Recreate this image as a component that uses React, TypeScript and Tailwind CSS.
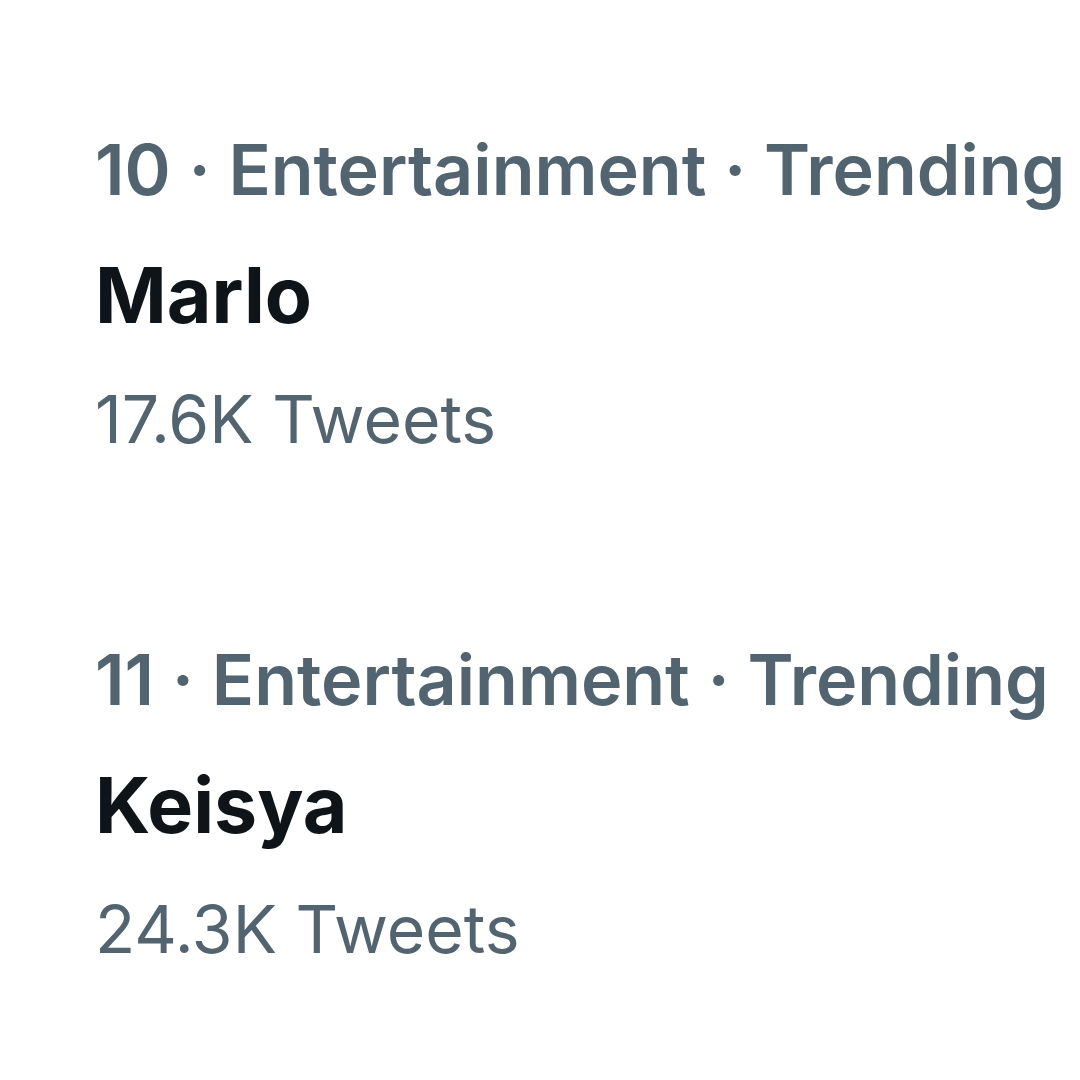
import * as React from 'react';

interface Trend {
  rank: number;
  category: string;
  name: string;
  count: string;
}

const trends: Trend[] = [
  { rank: 10, category: 'Entertainment', name: 'Marlo', count: '17.6K' },
  { rank: 11, category: 'Entertainment', name: 'Keisya', count: '24.3K' },
];

function TrendItem({ trend }: { trend: Trend }) {
  return (
    <div className="flex flex-col">
      {/* rank · category · status */}
      <div className="text-[70px] leading-[80px] font-semibold text-[#536471] whitespace-nowrap">
        {trend.rank} · {trend.category} · Trending
      </div>
      {/* trend name */}
      <div className="mt-[40px] text-[77px] leading-[90px] font-bold text-[#0f1419]">
        {trend.name}
      </div>
      {/* tweet count */}
      <div className="mt-[39px] text-[66px] leading-[80px] font-normal text-[#536471]">
        {trend.count} Tweets
      </div>
    </div>
  );
}

export default function App() {
  return (
    <div
      className="w-[1080px] h-[1080px] bg-white overflow-hidden pt-[130px] pl-[95px] flex flex-col gap-[181px]"
      style={{ fontFamily: 'Inter, "Noto Sans", sans-serif' }}
    >
      {trends.map((t) => (
        <TrendItem key={t.rank} trend={t} />
      ))}
    </div>
  );
}
